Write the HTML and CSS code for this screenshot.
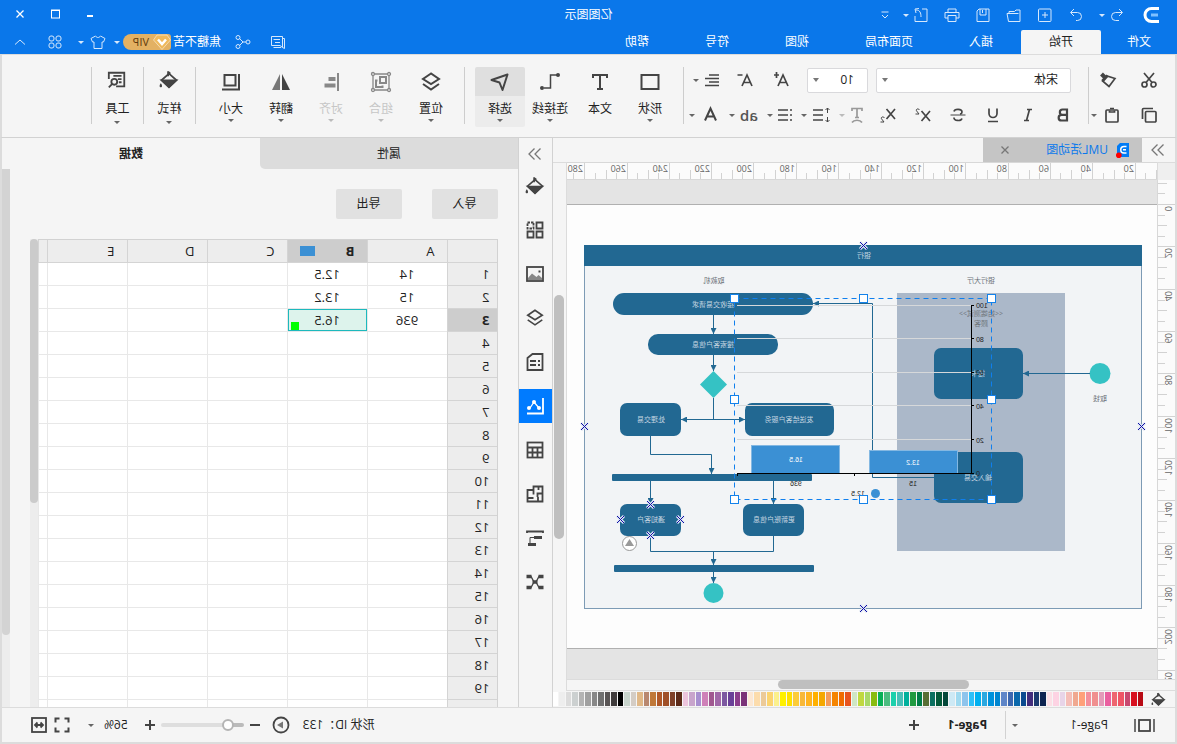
FILE: index.html
```html
<!DOCTYPE html>
<html lang="zh-CN">
<head>
<meta charset="utf-8">
<title>亿图图示</title>
<link rel="stylesheet" href="styles.css">
</head>
<body>
<svg class="defs" aria-hidden="true">
  <symbol id="logo" viewBox="0 0 16 18"><path d="M0 2.500h7.500a6.500 6.500 0 0 1 0 13H0" fill="none" stroke="#fff" stroke-width="3"/><path d="M1 9h7" stroke="#7fc0ff" stroke-width="3"/></symbol>
  <symbol id="redo" viewBox="0 0 16 16"><path d="M6 2 2.500 5.500 6 9M3 5.500h6.500a4 4 0 0 1 0 8H6"/></symbol>
  <symbol id="undo" viewBox="0 0 16 16"><path d="M10 2l3.500 3.500L10 9M13 5.500H6.500a4 4 0 0 0 0 8H8"/></symbol>
  <symbol id="new" viewBox="0 0 16 16"><rect x="2" y="2" width="12.500" height="12.500" rx="1"/><path d="M8 5v6M5 8h6"/></symbol>
  <symbol id="open" viewBox="0 0 16 16"><path d="M2 14.500V3h4l1.500 1.500H13V6M2 14.500h11.500l1.500-8H3.500"/></symbol>
  <symbol id="save" viewBox="0 0 16 16"><path d="M2 2h10l2 2v10.500H2zM5 2v6h6V2M8.500 3v3"/></symbol>
  <symbol id="print" viewBox="0 0 16 16"><path d="M4 5V2h8v3M4 11H1V5.500h14V11h-3M4 8.500h8v6H4z"/></symbol>
  <symbol id="export" viewBox="0 0 16 16"><path d="M7 2H2v12.500h12V9M8 10c0-4 1-7 5-7M10 1.500 14 2l-1 4"/></symbol>
  <symbol id="more" viewBox="0 0 16 16"><path d="M4.500 5h7M5 8l3 3 3-3"/></symbol>
  <symbol id="min" viewBox="0 0 16 16"><path d="M5 10h6" stroke-width="2"/></symbol>
  <symbol id="max" viewBox="0 0 16 16"><rect x="3.500" y="4" width="8" height="8"/><path d="M3 4.500h9"/></symbol>
  <symbol id="close" viewBox="0 0 16 16"><path d="M4.500 4.500l7 7M11.500 4.500l-7 7" stroke-width="1.300"/></symbol>
  <symbol id="comment" viewBox="0 0 16 16"><path d="M3.500 2.500h11v9H6l-2.500 2zM3 4.500H1.500v10l2-1M12.500 13.500H5M6 5.500h6.500M6 8.500h5"/></symbol>
  <symbol id="share" viewBox="0 0 16 16"><circle cx="3" cy="8" r="2"/><circle cx="13" cy="3.500" r="2"/><circle cx="13" cy="12.500" r="2"/><path d="M5 8h3l3.500-3.500M8 8l3.500 3.500"/></symbol>
  <symbol id="shirt" viewBox="0 0 16 16"><path d="M5.500 2C7 4 9 4 10.500 2L15 4.500 13.500 8H12v6.500H4V8H2.500L1 4.500z"/></symbol>
  <symbol id="clover" viewBox="0 0 16 16"><rect x="2" y="2" width="5" height="5" rx="2"/><rect x="9" y="2" width="5" height="5" rx="2"/><rect x="2" y="9" width="5" height="5" rx="2"/><rect x="9" y="9" width="5" height="5" rx="2"/></symbol>
  <symbol id="up" viewBox="0 0 16 16"><path d="M3 10.500 8 6l5 4.500"/></symbol>
  <symbol id="dbl" viewBox="0 0 16 16"><path d="M2.500 2.500 8 8l-5.500 5.500M8.500 2.500 14 8l-5.500 5.500" stroke-width="1.300"/></symbol>

  <symbol id="cut" viewBox="0 0 18 18"><circle cx="4.500" cy="13.500" r="2.500"/><circle cx="13.500" cy="13.500" r="2.500"/><path d="M4 2l8 9.500M14 2 6 11.500"/></symbol>
  <symbol id="brush" viewBox="0 0 18 18"><path d="M2 7.500 10 5l4.500 5L8 15.500z"/><path d="M9.500 4.500l5 5.500" stroke-width="3"/><path d="M12 6.500 15.500 3" stroke-width="4"/></symbol>
  <symbol id="copy" viewBox="0 0 18 18"><rect x="2" y="5.500" width="10.500" height="10.500" rx="1"/><path d="M5 2.500h9.500a1 1 0 0 1 1 1V13"/></symbol>
  <symbol id="paste" viewBox="0 0 18 18"><rect x="3" y="4" width="12" height="12" rx="1"/><path d="M6.500 4.500v1.500h5V4.500M7 2.500h4"/></symbol>
  <symbol id="grow" viewBox="0 0 18 18"><path d="M2 15 7 4l5 11M4 11.500h6M13.500 1v6M11 4h5"/></symbol>
  <symbol id="shrink" viewBox="0 0 18 18"><path d="M2 15 7 4l5 11M4 11.500h6M11.500 4h5"/></symbol>
  <symbol id="align" viewBox="0 0 18 18"><path d="M2 4h10M2 7.500h14M2 11h10M2 14.500h14"/></symbol>
  <symbol id="bold" viewBox="0 0 18 18"><path d="M5 3.500h4.500a2.500 2.500 0 0 1 0 5.300H5zM5 8.800h5.500a2.700 2.700 0 0 1 0 5.700H5z"/></symbol>
  <symbol id="italic" viewBox="0 0 18 18"><path d="M5 3.500h5M8 14.500h5M7.500 3.500l3 11"/></symbol>
  <symbol id="under" viewBox="0 0 18 18"><path d="M5 2.500v5a4 4 0 0 0 8 0v-5M4 15.500h10"/></symbol>
  <symbol id="strike" viewBox="0 0 18 18"><path d="M1.500 9h15" stroke-width="1"/><path d="M13 5.500C12.500 2.500 5 2.500 5 6c0 1 1 2 2 2.200M5 12.500c1 3 8.500 2.500 8-1"/></symbol>
  <symbol id="sup" viewBox="0 0 18 18"><path d="M2 5l8.500 10M10.500 5 2 15"/><path d="M12.500 4c1-2 4-1 3 .8L13 8h3.500" stroke-width="1"/></symbol>
  <symbol id="sub" viewBox="0 0 18 18"><path d="M2 3l8.500 10M10.500 3 2 13"/><path d="M12.500 12c1-2 4-1 3 .8L13 16h3.500" stroke-width="1"/></symbol>
  <symbol id="tarc" viewBox="0 0 18 18"><path d="M4 5V2.500h10V5M9 2.500V11M7 11.500h4M4 16.500c2-3 8-3 10 0"/></symbol>
  <symbol id="spacing" viewBox="0 0 20 18"><path d="M8 4h10M8 9h10M8 14h10"/><path d="M3.500 2v5M3.500 11v5M1.500 4l2-2 2 2M1.500 14l2 2 2-2" stroke-width="1"/></symbol>
  <symbol id="list" viewBox="0 0 18 18"><path d="M6 4h10M6 9h10M6 14h10"/><path d="M2 4h2M2 9h2M2 14h2"/></symbol>
  <symbol id="fontc" viewBox="0 0 18 18"><path d="M3 14.500 8.500 2.500l5.500 12M5 10.500h7" stroke-width="2"/></symbol>

  <symbol id="rect" viewBox="0 0 22 22"><rect x="2.500" y="4" width="17" height="14"/></symbol>
  <symbol id="text" viewBox="0 0 22 22"><path d="M4 7V4h14v3M11 4v14M8 18h6"/></symbol>
  <symbol id="conn" viewBox="0 0 22 22"><path d="M4 4h6.500v13H17" stroke-width="1.500"/><circle cx="3" cy="4" r="2" fill="currentColor" stroke="none"/><circle cx="19" cy="17" r="2" fill="currentColor" stroke="none"/></symbol>
  <symbol id="arrow" viewBox="0 0 22 22"><path d="M3.500 3.500 19.500 9l-8 2.500-3 7.500z" stroke-linejoin="round"/></symbol>
  <symbol id="layers" viewBox="0 0 22 22"><path d="M11 2.500 19 8l-8 5-8-5zM3 13l8 5.500 8-5.500"/></symbol>
  <symbol id="group" viewBox="0 0 22 22"><g stroke-width="1.300"><path d="M3 3h16v16H3z"/><g fill="#f5f5f5"><circle cx="3" cy="3" r="1.500"/><circle cx="19" cy="3" r="1.500"/><circle cx="3" cy="19" r="1.500"/><circle cx="19" cy="19" r="1.500"/></g></g><path d="M6 6h6v6H6zM14.500 9.500H16V16H9.500v-1.500"/></symbol>
  <symbol id="alignb" viewBox="0 0 22 22"><path d="M4 2v18"/><path d="M6.500 6h7v4h-7zM6.500 12.500h11v4h-11z" fill="currentColor" stroke="none"/></symbol>
  <symbol id="flip" viewBox="0 0 22 22"><path d="M10 3v16H2z" fill="currentColor" stroke="none"/><path d="M12 3v16h8z" fill="#777" stroke="none"/></symbol>
  <symbol id="size" viewBox="0 0 22 22"><path d="M6.500 4h11v10.500h-11zM3 3v15.500h17"/></symbol>
  <symbol id="bucket" viewBox="0 0 22 22"><path d="M11 4 19 11l-8 7.500L3 11z"/><path d="M3 11.500h16L11 19z" fill="currentColor"/><path d="M12 7V1.500M12 2 9.500 4"/><path d="M20 14.500c2 2.500 1.500 4.500 0 4.500s-2-2 0-4.500z" fill="currentColor" stroke="none"/></symbol>
  <symbol id="tool" viewBox="0 0 22 22"><path d="M20 10V3H3v15h9M6 6.500h9M6 10h4M6 13.500h3"/><circle cx="14" cy="13" r="3.200"/><path d="M16.500 15.500 20 19"/></symbol>

  <symbol id="grid4" viewBox="0 0 20 20"><path d="M2.500 2.500h6v6h-6zM2.500 11.500h6v6h-6zM11.500 11.500h6v6h-6z"/><path d="M11.500 2.500h6v6h-6z" stroke-dasharray="2.500 1"/></symbol>
  <symbol id="image" viewBox="0 0 20 20"><rect x="2" y="3" width="16" height="14"/><path d="M3 16V14l3.500-3 2 2L13 9.500l4 4.500v2z" fill="#888" stroke="none"/><path d="M4.500 6.500h2v2h-2z" fill="currentColor" stroke="none"/></symbol>
  <symbol id="doc" viewBox="0 0 20 20"><path d="M2.500 2h10l5 4v12h-15zM5 9h2M9 9h6M5 13h2M9 13h6"/></symbol>
  <symbol id="chart" viewBox="0 0 20 20"><path d="M2 2v15.500h16"/><path d="M6 12l5-6 4 6" stroke-width="1.300"/><g fill="currentColor" stroke="none"><circle cx="6" cy="12" r="2"/><circle cx="11" cy="6" r="2"/><circle cx="16" cy="12" r="2"/></g></symbol>
  <symbol id="table" viewBox="0 0 20 20"><rect x="2.500" y="2.500" width="15" height="15"/><path d="M2.500 7.500h15M2.500 12.500h15M7.500 7.500v10M12.500 7.500v10"/></symbol>
  <symbol id="floor" viewBox="0 0 20 20"><path d="M2.500 2.500h9V6h6v11.500h-15zM6.500 2.500V6M2.500 9.500h5V13M7 17v-4M11.500 6v4.500M11.500 14h6"/></symbol>
  <symbol id="gantt" viewBox="0 0 20 20"><path d="M2 5V3.500h16V5"/><path d="M3 9.500h8M9 16.500h8" stroke-width="3"/><path d="M11 9.500h4v6" stroke-width="1"/></symbol>
  <symbol id="mind" viewBox="0 0 20 20"><path d="M4 4.500h2l3 5.500-3 5.500H4M16 4.500h-2L11 10l3 5.500h2" stroke-width="1.300"/><path d="M1.500 4.500h5M13.500 4.500h5M1.500 15.500h5M13.500 15.500h5M7.500 10h5" stroke-width="3.500"/></symbol>

  <symbol id="pages" viewBox="0 0 22 18"><rect x="6" y="4" width="11" height="11"/><path d="M2 3v13M21 3v13" stroke-width="1.500"/></symbol>
  <symbol id="plus" viewBox="0 0 16 16"><path d="M3 8h10M8 3v10" stroke-width="2"/></symbol>
  <symbol id="minus" viewBox="0 0 16 16"><path d="M3 8h10" stroke-width="2"/></symbol>
  <symbol id="play" viewBox="0 0 18 18"><circle cx="9" cy="9" r="7.500" stroke-width="1.800"/><path d="M7 5.500v7L13 9z" fill="#777" stroke="none"/></symbol>
  <symbol id="full" viewBox="0 0 18 18"><path d="M2.500 6.500v-4h4M11.500 2.500h4v4M15.500 11.500v4h-4M6.500 15.500h-4v-4" stroke-width="2"/></symbol>
  <symbol id="fit" viewBox="0 0 18 18"><rect x="2" y="2" width="14" height="14"/><path d="M5 9h8M7.500 6.500 5 9l2.500 2.500M10.500 6.500 13 9l-2.500 2.500"/></symbol>
</svg>

<div class="app">
  <header class="top">
    <div class="titlebar">
      <div class="quick">
        <svg class="logo"><use href="#logo"/></svg>
        <button class="tb" aria-label="撤销"><svg><use href="#redo"/></svg></button><span class="caret light"></span>
        <button class="tb" aria-label="恢复"><svg><use href="#undo"/></svg></button>
        <button class="tb" aria-label="新建"><svg><use href="#new"/></svg></button>
        <button class="tb" aria-label="打开"><svg><use href="#open"/></svg></button>
        <button class="tb" aria-label="保存"><svg><use href="#save"/></svg></button>
        <button class="tb" aria-label="打印"><svg><use href="#print"/></svg></button>
        <button class="tb" aria-label="导出文件"><svg><use href="#export"/></svg></button><span class="caret light"></span>
        <button class="tb narrow" aria-label="更多"><svg><use href="#more"/></svg></button>
      </div>
      <div class="title">亿图图示</div>
      <div class="window">
        <button class="wb" aria-label="最小化"><svg><use href="#min"/></svg></button>
        <button class="wb" aria-label="最大化"><svg><use href="#max"/></svg></button>
        <button class="wb" aria-label="关闭"><svg><use href="#close"/></svg></button>
      </div>
    </div>
    <div class="menurow">
      <nav class="menus">
        <button class="menu file">文件</button>
        <button class="menu active">开始</button>
        <button class="menu">插入</button>
        <button class="menu wide">页面布局</button>
        <button class="menu">视图</button>
        <button class="menu">符号</button>
        <button class="menu">帮助</button>
      </nav>
      <div class="account">
        <button class="wb" aria-label="评论"><svg><use href="#comment"/></svg></button>
        <button class="wb" aria-label="分享"><svg><use href="#share"/></svg></button>
        <span class="user">焦糖不苦</span>
        <span class="vip"><svg class="gem" viewBox="0 0 18 16"><path d="M4 1h10l3.500 5L9 15.500.5 6z" fill="#efb95c" stroke="#fff" stroke-opacity=".5"/><path d="M5 5.500 9 10l4-4.500" fill="none" stroke="#fff" stroke-width="2.500"/></svg>VIP</span><span class="caret light"></span>
        <button class="tb narrow" aria-label="主题"><svg><use href="#shirt"/></svg></button><span class="caret light"></span>
        <button class="wb" aria-label="应用"><svg><use href="#clover"/></svg></button>
        <button class="wb" aria-label="收起"><svg><use href="#up"/></svg></button>
      </div>
    </div>
  </header>

  <section class="ribbon">
    <div class="clip">
      <div class="row"><button class="rb w41" aria-label="剪切"><svg><use href="#cut"/></svg></button><button class="rb w41" aria-label="格式刷"><svg><use href="#brush"/></svg></button></div>
      <div class="row"><button class="rb w41" aria-label="复制"><svg><use href="#copy"/></svg></button><button class="rb w34" aria-label="粘贴"><svg><use href="#paste"/></svg></button><span class="caret"></span></div>
    </div>
    <div class="sep"></div>
    <div class="fmt">
      <div class="row first">
        <span class="pick font"><select aria-label="字体"><option>宋体</option></select></span>
        <span class="pick num"><select aria-label="字号"><option>10</option></select></span>
        <button class="rb w36" aria-label="增大字号"><svg><use href="#grow"/></svg></button>
        <button class="rb w36" aria-label="减小字号"><svg><use href="#shrink"/></svg></button>
        <button class="rb w30" aria-label="对齐方式"><svg><use href="#align"/></svg></button><span class="caret"></span>
      </div>
      <div class="row">
        <button class="rb w35" aria-label="粗体"><svg class="heavy"><use href="#bold"/></svg></button>
        <button class="rb w35" aria-label="斜体"><svg><use href="#italic"/></svg></button>
        <button class="rb w35" aria-label="下划线"><svg><use href="#under"/></svg></button>
        <button class="rb w35" aria-label="删除线"><svg><use href="#strike"/></svg></button>
        <button class="rb w35" aria-label="上标"><svg><use href="#sup"/></svg></button>
        <button class="rb w35" aria-label="下标"><svg><use href="#sub"/></svg></button>
        <button class="rb w28 dim" aria-label="艺术字"><svg><use href="#tarc"/></svg></button><span class="caret pale"></span>
        <button class="rb w32" aria-label="行距"><svg class="broad"><use href="#spacing"/></svg></button><span class="caret"></span>
        <button class="rb w28" aria-label="列表"><svg><use href="#list"/></svg></button><span class="caret"></span>
        <button class="rb w32 ab">ab</button><span class="caret"></span>
        <button class="rb w34" aria-label="字体颜色"><svg><use href="#fontc"/></svg></button><span class="caret"></span>
      </div>
    </div>
    <div class="sep"></div>
    <div class="tools">
      <button class="tool"><svg><use href="#rect"/></svg><span>形状</span><i class="tri"></i></button>
      <button class="tool"><svg><use href="#text"/></svg><span>文本</span></button>
      <button class="tool"><svg><use href="#conn"/></svg><span>连接线</span><i class="tri"></i></button>
      <button class="tool on"><svg><use href="#arrow"/></svg><span>选择</span><i class="tri"></i></button>
    </div>
    <div class="sep"></div>
    <div class="tools">
      <button class="tool"><svg><use href="#layers"/></svg><span>位置</span><i class="tri"></i></button>
      <button class="tool off"><svg><use href="#group"/></svg><span>组合</span><i class="tri"></i></button>
      <button class="tool off"><svg><use href="#alignb"/></svg><span>对齐</span><i class="tri"></i></button>
      <button class="tool"><svg><use href="#flip"/></svg><span>翻转</span><i class="tri"></i></button>
      <button class="tool"><svg><use href="#size"/></svg><span>大小</span><i class="tri"></i></button>
    </div>
    <div class="sep"></div>
    <div class="tools solo"><button class="tool"><svg><use href="#bucket"/></svg><span>样式</span><i class="tri"></i></button></div>
    <div class="sep"></div>
    <div class="tools solo"><button class="tool"><svg><use href="#tool"/></svg><span>工具</span><i class="tri"></i></button></div>
    <div class="sep"></div>
  </section>

  <main class="main">
    <section class="editor">
      <div class="doctabs">
        <button class="expand" aria-label="展开"><svg><use href="#dbl"/></svg></button>
        <div class="doctab">
          <svg class="docicon" viewBox="0 0 14 16"><path d="M1 1h9l3 3v11H1z" fill="#007bf5"/><path d="M3.500 4.500H6a3.200 3.200 0 0 1 0 6.500H3.500M4 7.800h3" fill="none" stroke="#fff" stroke-width="1.500"/><circle cx="11.200" cy="13.200" r="2.800" fill="#f00"/></svg>
          <span>UML活动图</span>
          <button class="x" aria-label="关闭标签"><svg><use href="#close"/></svg></button>
        </div>
      </div>
      <div class="work">
        <div class="corner"></div>
        <div class="hruler">
          <svg width="1400" height="18" class="rule">
            <defs><g id="ht"><path d="M.5 0v17M11.500 10v7M21.500 7v10M32.500 10v7"/></g></defs>
            <path d="M.5 7v10M11.500 10v7"/>
            <use href="#ht" x="21"/><use href="#ht" x="64"/><use href="#ht" x="106"/><use href="#ht" x="148"/><use href="#ht" x="191"/><use href="#ht" x="233"/><use href="#ht" x="275"/><use href="#ht" x="318"/><use href="#ht" x="360"/><use href="#ht" x="403"/><use href="#ht" x="445"/><use href="#ht" x="487"/><use href="#ht" x="529"/><use href="#ht" x="572"/>
            <text x="23" y="9">20</text><text x="66" y="9">40</text><text x="108" y="9">60</text><text x="150" y="9">80</text><text x="193" y="9">100</text><text x="235" y="9">120</text><text x="277" y="9">140</text><text x="320" y="9">160</text><text x="362" y="9">180</text><text x="405" y="9">200</text><text x="447" y="9">220</text><text x="489" y="9">240</text><text x="531" y="9">260</text><text x="574" y="9">280</text>
          </svg>
        </div>
        <div class="vruler">
          <svg width="17" height="900" class="rule">
            <defs><g id="vt"><path d="M0 .5h17M10 11.500h7M8 21.500h9M10 32.500h7"/></g></defs>
            <path d="M8 3.500h9M10 13.500h7"/>
            <use href="#vt" y="24"/><use href="#vt" y="66"/><use href="#vt" y="109"/><use href="#vt" y="151"/><use href="#vt" y="193"/><use href="#vt" y="236"/><use href="#vt" y="278"/><use href="#vt" y="320"/><use href="#vt" y="363"/><use href="#vt" y="405"/><use href="#vt" y="447"/><use href="#vt" y="490"/>
            <g text-anchor="end"><text transform="translate(10 26) rotate(-90)">0</text><text transform="translate(10 68) rotate(-90)">20</text><text transform="translate(10 111) rotate(-90)">40</text><text transform="translate(10 153) rotate(-90)">60</text><text transform="translate(10 195) rotate(-90)">80</text><text transform="translate(10 238) rotate(-90)">100</text><text transform="translate(10 280) rotate(-90)">120</text><text transform="translate(10 322) rotate(-90)">140</text><text transform="translate(10 365) rotate(-90)">160</text><text transform="translate(10 407) rotate(-90)">180</text><text transform="translate(10 449) rotate(-90)">200</text><text transform="translate(10 492) rotate(-90)">220</text></g>
          </svg>
        </div>
        <div class="stage">
          <div class="paper">
            <svg class="diagram" width="591" height="443" viewBox="20 205 591 443">
              <defs>
                <marker id="ah" viewBox="0 0 6 6" refX="6" refY="3" markerWidth="6" markerHeight="6" markerUnits="userSpaceOnUse" orient="auto-start-reverse"><path d="M0 0 6 3 0 6z" fill="#226892"/></marker>
                <g id="xm"><path d="M-3.500-3.500l7 7M3.500-3.500l-7 7" stroke="#dfe6f2" stroke-width="3"/><path d="M-3.500-3.500l7 7M3.500-3.500l-7 7" stroke="#0d0da8" stroke-width="1"/></g>
                <rect id="hd" x="-4" y="-4" width="8" height="8" fill="#fff" stroke="#1482ea" stroke-width="1"/>
              </defs>
              <rect x="35.500" y="245.500" width="557" height="363" fill="#f2f4f6" stroke="#7d9bb5"/>
              <rect x="35" y="245" width="558" height="21" fill="#226892"/>
              <rect x="112" y="293" width="168" height="258" fill="#abb8c9"/>
              <g class="node">
                <rect x="154" y="348" width="89" height="51" rx="7"/>
                <rect x="154" y="452" width="89" height="51" rx="7"/>
                <rect x="364" y="293" width="200" height="22" rx="11"/>
                <rect x="399" y="334" width="130" height="21" rx="10"/>
                <rect x="343" y="403" width="89" height="33" rx="7"/>
                <rect x="496" y="403" width="61" height="33" rx="7"/>
                <rect x="365" y="474" width="200" height="7" rx="1"/>
                <rect x="373" y="504" width="61" height="32" rx="7"/>
                <rect x="496" y="504" width="61" height="32" rx="7"/>
                <rect x="363" y="565" width="200" height="7" rx="1"/>
              </g>
              <g class="teal"><circle cx="77" cy="373.500" r="10.500"/><path d="M463.500 371 477 384.500 463.500 398 450 384.500z"/><circle cx="463.500" cy="593" r="10"/></g>
              <g class="wire">
                <path d="M87 373.500h67" marker-end="url(#ah)"/>
                <path d="M243 477.500h61.500v-174H364" marker-end="url(#ah)"/>
                <path d="M463.500 315v19" marker-end="url(#ah)"/>
                <path d="M463.500 355v16" marker-end="url(#ah)"/>
                <path d="M463.500 398v21.500"/>
                <path d="M432 419.500h64" marker-end="url(#ah)" marker-start="url(#ah)"/>
                <path d="M526.500 436v18.500h-61V474" marker-end="url(#ah)"/>
                <path d="M526.500 481v23" marker-end="url(#ah)"/>
                <path d="M403.500 481v23" marker-end="url(#ah)"/>
                <path d="M526.500 536v15.500h-123V536"/>
                <path d="M463.500 551v14" marker-end="url(#ah)"/>
                <path d="M463.500 572v11" marker-end="url(#ah)"/>
              </g>
              <g class="cap"><text x="196" y="283">银行大厅</text><text x="463" y="283">取款机</text><text x="77" y="401">取钱</text><text x="196" y="316">&lt;&lt;始端测试&gt;&gt;</text><text x="196" y="326">顾客</text></g>
              <g class="lab"><text x="313" y="258">银行</text><text x="199" y="376">插卡</text><text x="199" y="480">输入交易</text><text x="464" y="307">接收交易请求</text><text x="464" y="347">搜索客户信息</text><text x="388" y="422">发送给客户服务</text><text x="526" y="422">处理交易</text><text x="403" y="522">更新账户信息</text><text x="526" y="522">通知客户</text></g>
              <path d="M206 305.500h234M206 338.500h234M206 372.500h234M206 405.500h234M206 439.500h234" stroke="#d6d8da"/>
              <g fill="#3b90d4" stroke="#84b8e2"><rect x="219.500" y="450.500" width="88" height="23"/><rect x="337.500" y="445.500" width="88" height="28"/></g>
              <path d="M205.500 305v169M203 305.500h3M203 338.500h3M203 372.500h3M203 405.500h3M203 439.500h3M203 473.500h237M322.500 473v3M439.500 473v3" stroke="#000" fill="none"/>
              <g class="ax"><g text-anchor="end"><text x="201" y="308">100</text><text x="201" y="342">80</text><text x="201" y="375">60</text><text x="201" y="409">40</text><text x="201" y="443">20</text><text x="201" y="476">0</text></g><g text-anchor="middle"><text x="264" y="486">15</text><text x="381" y="486">936</text><text x="319" y="496">12.5</text><text x="264" y="465" fill="#fff">13.2</text><text x="381" y="462" fill="#fff">16.5</text></g></g>
              <circle cx="301.500" cy="493.500" r="4.500" fill="#3b90d4"/>
              <rect x="185.500" y="298.500" width="257" height="201" fill="none" stroke="#0f7fee" stroke-dasharray="5 4"/>
              <use href="#hd" x="185.500" y="298.500"/><use href="#hd" x="313.500" y="298.500"/><use href="#hd" x="442.500" y="298.500"/><use href="#hd" x="185.500" y="399.500"/><use href="#hd" x="442.500" y="399.500"/><use href="#hd" x="185.500" y="499.500"/><use href="#hd" x="313.500" y="499.500"/><use href="#hd" x="442.500" y="499.500"/>
              <use href="#xm" x="313.500" y="245.500"/><use href="#xm" x="35.500" y="426.500"/><use href="#xm" x="592.500" y="426.500"/><use href="#xm" x="313.500" y="608.500"/>
              <use href="#xm" x="526.500" y="504.500"/><use href="#xm" x="526.500" y="535.500"/><use href="#xm" x="496.500" y="519.500"/><use href="#xm" x="556.500" y="519.500"/>
              <circle cx="547.500" cy="543.500" r="7" fill="#fff" stroke="#999"/><path d="M547.500 539l4.500 7h-9z" fill="#999"/>
            </svg>
          </div>
        </div>
        <div class="vscroll"><i></i></div>
        <div class="hscroll"><i></i></div>
      </div>
      <div class="palette"><button class="fill" aria-label="填充"><svg><use href="#bucket"/></svg></button><div class="swatches" id="swatches"></div></div>
    </section>

    <aside class="rail">
      <button class="collapse" aria-label="收起面板"><svg><use href="#dbl"/></svg></button>
      <button aria-label="填充样式"><svg><use href="#bucket"/></svg></button>
      <button aria-label="组件"><svg><use href="#grid4"/></svg></button>
      <button aria-label="图片"><svg><use href="#image"/></svg></button>
      <button aria-label="图层"><svg><use href="#layers"/></svg></button>
      <button aria-label="页面"><svg><use href="#doc"/></svg></button>
      <button class="on" aria-label="图表"><svg><use href="#chart"/></svg></button>
      <button aria-label="表格"><svg><use href="#table"/></svg></button>
      <button aria-label="平面图"><svg><use href="#floor"/></svg></button>
      <button aria-label="甘特图"><svg><use href="#gantt"/></svg></button>
      <button aria-label="思维导图"><svg><use href="#mind"/></svg></button>
    </aside>

    <section class="panel">
      <div class="ptabs"><button class="ptab">属性</button><button class="ptab on">数据</button></div>
      <div class="pbody">
        <div class="pcontent">
          <div class="io"><button>导入</button><button>导出</button></div>
          <div class="sheetwrap">
            <div class="sheetview">
              <table class="sheet">
                <thead><tr><th class="rowh"></th><th>A</th><th class="sel">B<i class="chip"></i></th><th>C</th><th>D</th><th>E</th><th class="rest"></th></tr></thead>
                <tbody>
                  <tr><th>1</th><td>14</td><td>12.5</td><td></td><td></td><td></td><td></td></tr>
                  <tr><th>2</th><td>15</td><td>13.2</td><td></td><td></td><td></td><td></td></tr>
                  <tr><th class="sel">3</th><td>936</td><td class="cur">16.5</td><td></td><td></td><td></td><td></td></tr>
                  <tr><th>4</th><td></td><td></td><td></td><td></td><td></td><td></td></tr>
                  <tr><th>5</th><td></td><td></td><td></td><td></td><td></td><td></td></tr>
                  <tr><th>6</th><td></td><td></td><td></td><td></td><td></td><td></td></tr>
                  <tr><th>7</th><td></td><td></td><td></td><td></td><td></td><td></td></tr>
                  <tr><th>8</th><td></td><td></td><td></td><td></td><td></td><td></td></tr>
                  <tr><th>9</th><td></td><td></td><td></td><td></td><td></td><td></td></tr>
                  <tr><th>10</th><td></td><td></td><td></td><td></td><td></td><td></td></tr>
                  <tr><th>11</th><td></td><td></td><td></td><td></td><td></td><td></td></tr>
                  <tr><th>12</th><td></td><td></td><td></td><td></td><td></td><td></td></tr>
                  <tr><th>13</th><td></td><td></td><td></td><td></td><td></td><td></td></tr>
                  <tr><th>14</th><td></td><td></td><td></td><td></td><td></td><td></td></tr>
                  <tr><th>15</th><td></td><td></td><td></td><td></td><td></td><td></td></tr>
                  <tr><th>16</th><td></td><td></td><td></td><td></td><td></td><td></td></tr>
                  <tr><th>17</th><td></td><td></td><td></td><td></td><td></td><td></td></tr>
                  <tr><th>18</th><td></td><td></td><td></td><td></td><td></td><td></td></tr>
                  <tr><th>19</th><td></td><td></td><td></td><td></td><td></td><td></td></tr>
                  <tr><th></th><td></td><td></td><td></td><td></td><td></td><td></td></tr>
                </tbody>
              </table>
            </div>
            <div class="sbar inner"><i></i></div>
          </div>
        </div>
        <div class="sbar outer"><i></i></div>
      </div>
    </section>
  </main>

  <footer class="status">
    <div class="left">
      <button class="sb pg" aria-label="页面列表"><svg><use href="#pages"/></svg></button>
      <span class="pname">Page-1</span><i class="tri"></i>
      <span class="divider"></span>
      <button class="ptabname">Page-1</button>
      <button class="sb" aria-label="新建页面"><svg><use href="#plus"/></svg></button>
    </div>
    <div class="right">
      <span class="sid">形状 ID：133</span>
      <button class="sb run" aria-label="演示"><svg class="big"><use href="#play"/></svg></button>
      <button class="sb tight" aria-label="缩小"><svg><use href="#minus"/></svg></button>
      <input class="zoom" type="range" min="0" max="100" value="13" aria-label="缩放">
      <button class="sb tight" aria-label="放大"><svg><use href="#plus"/></svg></button>
      <span class="pct">56%</span><i class="tri"></i>
      <button class="sb" aria-label="全屏"><svg class="big"><use href="#full"/></svg></button>
      <button class="sb" aria-label="适应宽度"><svg class="big"><use href="#fit"/></svg></button>
    </div>
  </footer>
</div>
<script src="palette.js"></script>
</body>
</html>
```

FILE: palette.js
```js
const colors = ("b80a14 d8101f c8486f ef5566 ee6570 ea5fa0 e49ab9 f08f8f f48f9c ffa07a f0a890 f5beb8 e8d4e8 fdd3e3 fce0e6 " +
  "0e2450 1c3a6e 432d7c 0b4a8f 0b68ab 3d68b0 5f86c8 0086d0 0092dc 2ba8e0 00b0f0 2ec0f8 8ec4ec a0daf0 cde9f5 " +
  "04483a 045a3a 0a7060 586f35 007d48 209a40 00b09c 48c0b8 1cd0ac 4cbc80 08b058 88bc10 a8d868 c0d840 cfe6c4 " +
  "e8541e f06c00 f58400 f59c58 f5a800 ffb000 ffb420 f8b838 fccc38 ffe000 fff000 fbf08c fbd470 ecca98 fcdcac fce8d4 " +
  "7a3278 8b3d8c 6a4098 7c58a0 a068a8 a05890 cf80b8 a890d0 c8a4cc ecc4dc " +
  "5c2a18 7e4028 a05028 b05828 c07838 b88870 e0b888 d4ccc4 c8d4cc " +
  "000000 403c3c 585454 707070 888888 a0a0a0 b4b4b4 ccd0d0 dcdcdc eeeeee ffffff").split(" ");
const box = document.getElementById("swatches");
for (const c of colors) {
  const b = document.createElement("button");
  b.style.background = "#" + c;
  b.setAttribute("aria-label", "#" + c);
  box.append(b);
}
```

FILE: styles.css
```css
* { box-sizing: border-box; }
body { margin: 0; overflow: hidden; font: 12px/16px "Open Sans", "Noto Sans CJK SC", sans-serif; color: #222; }
button, select, input { font: inherit; color: inherit; border: 0; padding: 0; margin: 0; background: none; }
svg { display: block; flex: none; fill: none; stroke: currentColor; }
.defs { position: absolute; width: 0; height: 0; }

/* The whole window is drawn in mirror image. */
.app { display: flex; flex-direction: column; height: 100vh; transform: scaleX(-1); background: #f5f5f5; }

.top { background: #0a77ea; color: #fff; }
.titlebar { display: grid; grid-template-columns: 1fr auto 1fr; align-items: center; height: 30px; }
.quick { display: flex; align-items: center; padding-left: 18px; }
.logo { width: 16px; height: 18px; margin-right: 10px; }
.tb, .wb { display: flex; align-items: center; justify-content: center; height: 24px; width: 31px; color: #d6e8fc; }
.tb svg, .wb svg { width: 16px; height: 16px; }
.wb { width: 35px; }
.tb.narrow { width: 22px; }
.caret { width: 10px; height: 10px; margin: 0 5px 0 -5px; display: flex; align-items: center; justify-content: center; }
.caret::before, .tri { content: ""; width: 0; height: 0; border: 3px solid transparent; border-top-color: #666; border-bottom-width: 0; }
.caret.light::before { border-top-color: #d6e8fc; }
.caret.pale::before { border-top-color: #bbb; }
.window, .account { display: flex; justify-content: flex-end; align-items: center; padding-right: 3px; }
.window { align-self: start; color: #fff; }
.window .wb { height: 28px; color: #fff; }
.menurow { display: flex; justify-content: space-between; height: 24px; }
.menus { display: flex; }
.menu { width: 80px; }
.menu.file { width: 76px; }
.menu.wide { width: 104px; }
.menu.active { background: #f5f5f5; color: #222; border-radius: 2px 2px 0 0; }
.account .caret { margin: 0 3px 0 1px; }
.user { margin-left: 4px; }
.vip { display: flex; align-items: center; width: 48px; height: 16px; border-radius: 3px 8px 8px 3px; background: #e3b163; color: #5d3a0c; font-size: 11px; gap: 4px; margin-left: 2px; }
.gem { width: 18px; height: 16px; }

.ribbon { display: flex; height: 84px; padding-top: 12px; border: solid #dcdcdc; border-width: 1px 2px; border-bottom-color: #d2d2d2; }
.sep { width: 1px; height: 57px; background: #cdcdcd; flex: none; }
.clip { width: 86px; padding-left: 5px; }
.row { display: flex; align-items: center; height: 26px; margin-bottom: 9px; }
.rb { display: flex; align-items: center; justify-content: center; height: 26px; flex: none; color: #444; }
.rb svg { width: 18px; height: 18px; stroke-width: 1.700; }
.rb .heavy { stroke-width: 2.200; }
.rb .broad { width: 20px; }
.ribbon .caret { margin: 0 0 0 -4px; }
.dim { color: #999; }
.ab { font-size: 15px; font-weight: 600; color: #555; }
.w28 { width: 28px; } .w30 { width: 30px; } .w32 { width: 32px; } .w34 { width: 34px; } .w35 { width: 35px; } .w36 { width: 36px; } .w41 { width: 41px; }
.fmt { width: 404px; padding-left: 7px; }
.first { padding-left: 10px; }
.pick { position: relative; height: 25px; margin-right: 8px; }
.pick select { appearance: none; width: 100%; height: 100%; padding: 0 12px; border: 1px solid #d9d9dc; border-radius: 2px; background: #fff; }
.pick::after { content: ""; position: absolute; right: 6px; top: 10px; border: 3px solid transparent; border-top: 4px solid #777; border-bottom-width: 0; }
.font { width: 195px; }
.num { width: 61px; }
.num select { padding-left: 13px; }
.tools { display: flex; padding: 0 10px 0 8px; }
.tools.solo { padding: 0; }
.tool { display: flex; flex-direction: column; align-items: center; width: 50px; height: 60px; color: #444; }
.tool svg { width: 22px; height: 22px; margin: 4px 0 8px; stroke-width: 2; }
.tool span { color: #222; }
.tool .tri { margin-top: 2px; }
.tool.on { background: linear-gradient(#dfdfdf 29px, #ececec 29px); border-radius: 2px; }
.tool.off { color: #888; }
.tool.off span { color: #c6c6c6; }
.tool.off .tri { border-top-color: #bbb; }
.solo .tool { width: 51px; }
.solo .tool svg { width: 20px; height: 20px; margin: 3px 0 11px; }
.solo .tool .tri { margin-top: 4px; }

.main { display: flex; flex: 1; min-height: 0; border: solid #dcdcdc; border-width: 0 2px; }
.editor { display: flex; flex-direction: column; flex: 623 1 0; min-width: 0; border-right: 1px solid #d2d2d2; }
.doctabs { display: flex; height: 24px; }
.expand { width: 33px; display: flex; align-items: center; justify-content: center; color: #777; }
.expand svg { width: 16px; height: 16px; }
.doctab { display: flex; align-items: center; width: 159px; padding: 0 14px 0 12px; background: #c5c5c5; color: #0a78ec; }
.doctab span { flex: 1; line-height: 24px; }
.docicon { width: 14px; height: 16px; margin-right: 8px; stroke: none; }
.x svg { width: 16px; height: 16px; color: #777; }
.work { display: grid; grid-template: 18px minmax(0, 1fr) 12px / 18px minmax(0, 1fr) 14px; flex: 1; min-height: 0; }
.hruler { grid-area: 1 / 2; overflow: hidden; background: #fbfbfb; border: solid #d8d8d8; border-width: 1px 0; }
.corner { grid-area: 1 / 1; background: #efefef; border: solid #dcdcdc; border-width: 1px 1px 0 0; }
.vruler { grid-area: 2 / 1; overflow: hidden; background: #fbfbfb; border-right: 1px solid #d8d8d8; }
.rule { stroke: #d2d2d2; }
.rule text { fill: #666; stroke: none; font-size: 9px; }
.stage { grid-area: 2 / 2; overflow: hidden; background: #e4e4e4; padding-top: 24px; }
.paper { background: #fdfdfd; border: solid #b0b0b0; border-width: 1px 0; }
.diagram { overflow: visible; stroke: none; font-size: 7px; }
.node { fill: #226892; }
.teal { fill: #35c2c4; }
.wire { stroke: #226892; fill: none; }
.lab { fill: #c3d4e0; text-anchor: middle; }
.cap { fill: #6f757c; text-anchor: middle; }
.ax { fill: #222; font-family: "Liberation Sans", sans-serif; }
.vscroll { grid-area: 1 / 3 / 4 / 4; border-left: 1px solid #dcdcdc; border-top: 1px solid #dcdcdc; padding: 132px 1px 0 2px; }
.vscroll i { display: block; height: 244px; border-radius: 5px; background: #bfbfbf; }
.hscroll { grid-area: 3 / 1 / 4 / 3; border: solid #dcdcdc; border-width: 1px 0; padding-left: 206px; }
.hscroll i { display: block; width: 191px; height: 9px; border-radius: 5px; background: #bfbfbf; }
.palette { display: flex; align-items: center; height: 16px; }
.fill { width: 32px; display: flex; justify-content: center; color: #444; }
.fill svg { width: 15px; height: 15px; stroke-width: 2; }
.swatches { display: grid; grid-auto-flow: column; grid-auto-columns: minmax(0, 1fr); gap: 1px; flex: 1; height: 14px; }
.swatches button { min-width: 0; }

.rail { display: flex; flex-direction: column; width: 34px; border-right: 1px solid #d2d2d2; color: #444; }
.rail button { display: flex; align-items: center; justify-content: center; height: 34px; margin-bottom: 10px; flex: none; }
.rail svg { width: 20px; height: 20px; stroke-width: 1.800; }
.rail .collapse { height: 31px; margin: 0; color: #777; }
.rail .collapse svg { width: 16px; height: 16px; }
.rail .on { background: #007bff; color: #fff; }

.panel { display: flex; flex-direction: column; flex: 516 1 0; min-width: 0; }
.ptabs { display: grid; grid-template-columns: 1fr 1fr; height: 31px; }
.ptab { background: #dcdcdc; border-radius: 0 0 5px 0; }
.ptab.on { background: none; font-weight: 700; }
.pbody { display: flex; flex: 1; min-height: 0; }
.pcontent { display: flex; flex-direction: column; flex: 1; min-width: 0; padding: 20px 20px 0; }
.io { display: flex; gap: 30px; margin-bottom: 20px; }
.io button { width: 66px; height: 30px; background: #e1e1e1; border-radius: 2px; }
.sheetwrap { display: flex; flex: 1; min-height: 0; }
.sheetview { flex: 1; min-width: 0; overflow: hidden; border: solid #d2d2d2; border-width: 1px 0 0 1px; background: #fff; }
.sheet { width: 100%; table-layout: fixed; border-collapse: separate; border-spacing: 0; font-size: 13px; line-height: 18px; }
.sheet th, .sheet td { height: 23px; padding: 0; border: solid #e8e8e8; border-width: 0 1px 1px 0; text-align: center; }
.sheet th { background: #ededed; border-color: #d4d4d4; text-align: left; font-weight: 400; padding-left: 7px; width: 80px; }
.sheet thead th { padding-left: 12px; }
.sheet thead .rowh { width: 50px; }
.sheet thead .rest { width: auto; padding: 0; }
.sheet .sel { background: #cdcdcd; font-weight: 700; }
.chip { float: right; width: 15px; height: 10px; margin: 4px 12px 0 0; background: #3b90d4; }
.sheet .cur { position: relative; background: #ddf3ec; box-shadow: inset 0 0 0 1px #1db9bd; }
.cur::after { content: ""; position: absolute; right: 3px; bottom: 1px; width: 8px; height: 8px; background: #0f0; }
.sbar { width: 8px; background: #ededed; flex: none; }
.sbar i { display: block; background: #d3d3d3; border-radius: 0 0 4px 4px; }
.inner i { height: 264px; background: #cbcbcb; border-radius: 4px; }
.outer i { height: 466px; }

.status { display: flex; justify-content: space-between; align-items: center; height: 37px; border: solid #dcdcdc; border-width: 1px 2px 2px; flex: none; }
.left, .right { display: flex; align-items: center; }
.sb { display: flex; align-items: center; justify-content: center; width: 23px; height: 24px; color: #444; }
.sb svg { width: 16px; height: 16px; stroke-width: 1.800; }
.sb.pg { width: 60px; }
.sb.pg svg { width: 22px; height: 18px; }
.sb svg.big { width: 18px; height: 18px; }
.sb.tight { width: 22px; }
.sb.run { margin-right: 4px; }
.pname { margin: 0 52px 0 7px; }
.divider { width: 1px; height: 28px; background: #d2d2d2; margin: 0 18px 0 6px; }
.ptabname { font-weight: 700; margin-right: 22px; }
.right { padding-right: 26px; }
.sid { margin-right: 10px; }
.zoom { appearance: none; width: 83px; height: 12px; }
.zoom::-webkit-slider-runnable-track { height: 4px; border-radius: 2px; background: linear-gradient(90deg, #bbb 13%, #dedede 13%); }
.zoom::-webkit-slider-thumb { appearance: none; width: 12px; height: 12px; margin-top: -4px; border: 2px solid #b5b5b5; border-radius: 50%; background: #fff; }
.pct { margin: 0 10px 0 11px; }
.pct + .tri { margin-right: 14px; }
```
